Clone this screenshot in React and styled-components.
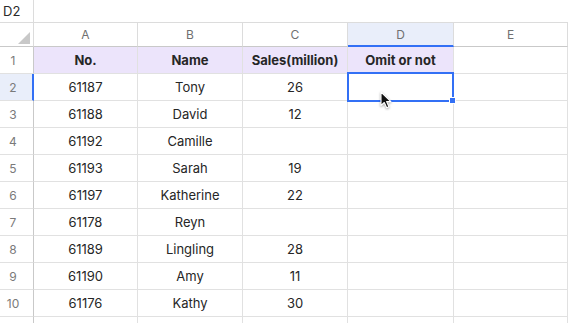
import React from "react";
import styled, { createGlobalStyle } from "styled-components";

const Global = createGlobalStyle`
  html, body { margin: 0; padding: 0; background: #fff; }
  body { font-family: Inter, "Noto Sans", "Liberation Sans", sans-serif; overflow: hidden; }
  * { box-sizing: border-box; }
`;

const Page = styled.div`
  width: 568px;
  height: 323px;
  overflow: hidden;
  display: flex;
  flex-direction: column;
`;

const FormulaBar = styled.div`
  height: 23px;
  flex: none;
  display: flex;
  border-bottom: 1px solid #dcdcdc;
`;

const NameBox = styled.div`
  width: 34px;
  border-right: 1px solid #dcdcdc;
  font-size: 13px;
  color: #2a2a2a;
  display: flex;
  align-items: center;
  padding-left: 3px;
`;

const Grid = styled.div`
  display: grid;
  grid-template-columns: 34px 104px 105px 105px 106px 1fr;
  grid-auto-rows: 27px;
  grid-template-rows: 24px;
`;

const Cell = styled.div`
  position: relative;
  border-right: 1px solid #e1e1e1;
  border-bottom: 1px solid #e1e1e1;
  display: flex;
  align-items: center;
  justify-content: center;
  font-size: 13px;
  color: #262626;
  background: ${(p) => (p.$head ? "#ece4fb" : "#fff")};
  font-weight: ${(p) => (p.$head ? 700 : 400)};
`;

const ColHead = styled.div`
  position: relative;
  border-right: 1px solid #dcdcdc;
  border-bottom: ${(p) => (p.$active ? "2px solid #3370f5" : "1px solid #c9c9c9")};
  background: ${(p) => (p.$active ? "#e9eefa" : "#fff")};
  display: flex;
  align-items: center;
  justify-content: center;
  padding-top: ${(p) => (p.$active ? "1px" : "0")};
  font-size: 12px;
  color: #707070;
`;

const Corner = styled.div`
  position: relative;
  border-right: 1px solid #dcdcdc;
  border-bottom: 1px solid #c9c9c9;
  display: flex;
  align-items: flex-end;
  justify-content: flex-end;
  padding: 0 3px 2px 0;
`;

const Triangle = styled.div`
  width: 0;
  height: 0;
  border-left: 12px solid transparent;
  border-bottom: 12px solid #c8c8c8;
`;

const RowHead = styled.div`
  border-right: ${(p) => (p.$active ? "2px solid #3370f5" : "1px solid #c9c9c9")};
  border-bottom: 1px solid #e1e1e1;
  background: ${(p) => (p.$active ? "#e9eefa" : "#fff")};
  display: flex;
  align-items: center;
  justify-content: center;
  padding-right: ${(p) => (p.$active ? "6px" : "7px")};
  font-size: 12px;
  color: #7a7a7a;
`;

const Selection = styled.div`
  position: absolute;
  z-index: 2;
  top: -2px;
  left: -1px;
  right: -1px;
  bottom: -2px;
  border: 2px solid #3370f5;
  pointer-events: none;
`;

const Handle = styled.div`
  position: absolute;
  right: -3px;
  bottom: -3px;
  width: 5px;
  height: 5px;
  background: #3370f5;
  border: 1px solid #fff;
  box-sizing: content-box;
  margin: -1px;
`;

const Cursor = styled.svg`
  position: absolute;
  z-index: 3;
  left: 32px;
  top: 17px;
  width: 12px;
  height: 18px;
  overflow: visible;
  filter: drop-shadow(0.5px 1px 0.8px rgba(0, 0, 0, 0.35));
`;

const cols = ["A", "B", "C", "D", "E"];
const header = ["No.", "Name", "Sales(million)", "Omit or not", ""];
const rows = [
  ["61187", "Tony", "26"],
  ["61188", "David", "12"],
  ["61192", "Camille", ""],
  ["61193", "Sarah", "19"],
  ["61197", "Katherine", "22"],
  ["61178", "Reyn", ""],
  ["61189", "Lingling", "28"],
  ["61190", "Amy", "11"],
  ["61176", "Kathy", "30"],
  ["", "", ""],
];

export default function App() {
  return (
    <Page>
      <Global />
      <FormulaBar>
        <NameBox>D2</NameBox>
      </FormulaBar>
      <Grid>
        <Corner>
          <Triangle />
        </Corner>
        {cols.map((c) => (
          <ColHead key={c} $active={c === "D"}>
            {c}
          </ColHead>
        ))}
        <RowHead>1</RowHead>
        {header.map((h, i) => (
          <Cell key={i} $head={i < 4}>
            {h}
          </Cell>
        ))}
        {rows.map((r, ri) => (
          <React.Fragment key={ri}>
            <RowHead $active={ri === 0}>{ri < 9 ? ri + 2 : ""}</RowHead>
            <Cell>{r[0]}</Cell>
            <Cell>{r[1]}</Cell>
            <Cell>{r[2]}</Cell>
            <Cell>
              {ri === 0 && (
                <>
                  <Selection>
                    <Handle />
                  </Selection>
                  <Cursor viewBox="0 0 12 18">
                    <path
                      d="M1 1 L1 14.5 L4.3 11.5 L6.7 16.8 L8.9 15.8 L6.6 10.6 L10.9 10.6 Z"
                      fill="#111"
                      stroke="#fff"
                      strokeWidth="1.1"
                      strokeLinejoin="round"
                    />
                  </Cursor>
                </>
              )}
            </Cell>
            <Cell />
          </React.Fragment>
        ))}
      </Grid>
    </Page>
  );
}
